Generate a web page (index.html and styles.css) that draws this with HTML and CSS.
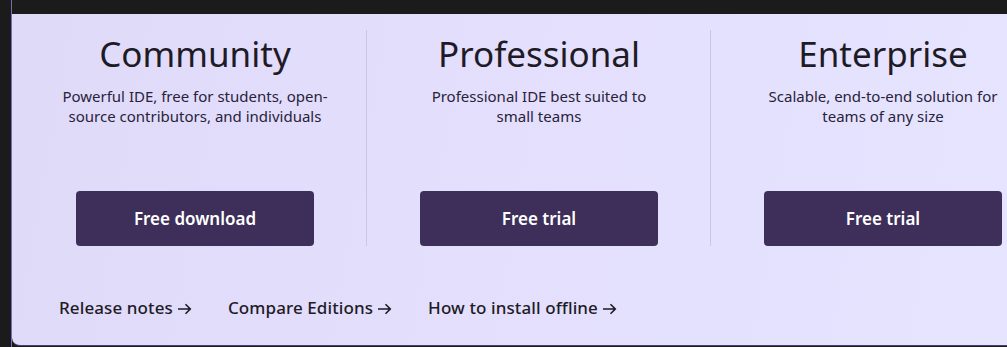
FILE: index.html
```html
<!doctype html>
<html lang="en">
	<head>
		<meta charset="utf-8" />
		<title>Editions</title>
		<link rel="stylesheet" href="styles.css">
	</head>
	<body>
		<div class="frame">
			<main class="panel">
				<section class="editions">
					<div class="edition">
						<h2>Community</h2>
						<p>Powerful IDE, free for students, open-<br>source contributors, and individuals</p>
						<a class="action">Free download</a>
					</div>
					<div class="edition">
						<h2>Professional</h2>
						<p>Professional IDE best suited to<br>small teams</p>
						<a class="action">Free trial</a>
					</div>
					<div class="edition">
						<h2>Enterprise</h2>
						<p>Scalable, end-to-end solution for<br>teams of any size</p>
						<a class="action">Free trial</a>
					</div>
				</section>
				<nav class="links">
					<a>Release notes <svg class="arrow" viewBox="0 0 15 12"><path d="M1 6h12.5M8.5 1.2l4.8 4.8-4.8 4.8"/></svg></a>
					<a>Compare Editions <svg class="arrow" viewBox="0 0 15 12"><path d="M1 6h12.5M8.5 1.2l4.8 4.8-4.8 4.8"/></svg></a>
					<a>How to install offline <svg class="arrow" viewBox="0 0 15 12"><path d="M1 6h12.5M8.5 1.2l4.8 4.8-4.8 4.8"/></svg></a>
				</nav>
			</main>
		</div>
	</body>
</html>
```

FILE: styles.css
```css
/* page */

body {
	margin: 0;
	width: 1007px;
	height: 347px;
	overflow: hidden;
	background: #1b1b1b;
	font-family: "Noto Sans", "Open Sans", sans-serif;
	color: #1e1b26;
}

.frame {
	margin-left: 11px;
	border-left: 1px solid #7c6ab4;
	padding-top: 14px;
	height: 333px;
}

.panel {
	box-sizing: border-box;
	height: 332px;
	padding: 16px 0 0 11px;
	background: linear-gradient(100deg, #e0daf9 0%, #e3dffd 50%, #e6e4ff 100%);
	border-bottom: 1px solid #4a3f76;
	border-bottom-left-radius: 8px;
}

/* editions */

.editions {
	display: flex;
}

.edition {
	flex-shrink: 0;
	box-sizing: border-box;
	width: 344px;
	height: 216px;
	display: flex;
	flex-direction: column;
	align-items: center;
	text-align: center;
}

.edition + .edition {
	border-left: 1px solid #cbc5e4;
	margin-left: -1px;
	width: 345px;
}

.edition h2 {
	margin: 0;
	font-size: 35px;
	font-weight: 400;
	line-height: 48px;
}

.edition p {
	margin: 8px 0 0;
	font-size: 15px;
	line-height: 20px;
	color: #28233a;
}

.action {
	margin-top: auto;
	width: 238px;
	height: 55px;
	display: flex;
	align-items: center;
	justify-content: center;
	border-radius: 4px;
	background: #3d2f59;
	color: white;
	font-size: 17px;
	font-weight: 600;
	cursor: pointer;
}

/* links */

.links {
	display: flex;
	gap: 36px;
	padding: 50px 0 0 36px;
}

.links a {
	display: flex;
	align-items: center;
	gap: 4px;
	font-size: 17px;
	font-weight: 500;
	letter-spacing: 0.1px;
	cursor: pointer;
}

.arrow {
	width: 15px;
	height: 12px;
	margin-top: 2px;
	fill: none;
	stroke: currentColor;
	stroke-width: 1.6;
}
```
